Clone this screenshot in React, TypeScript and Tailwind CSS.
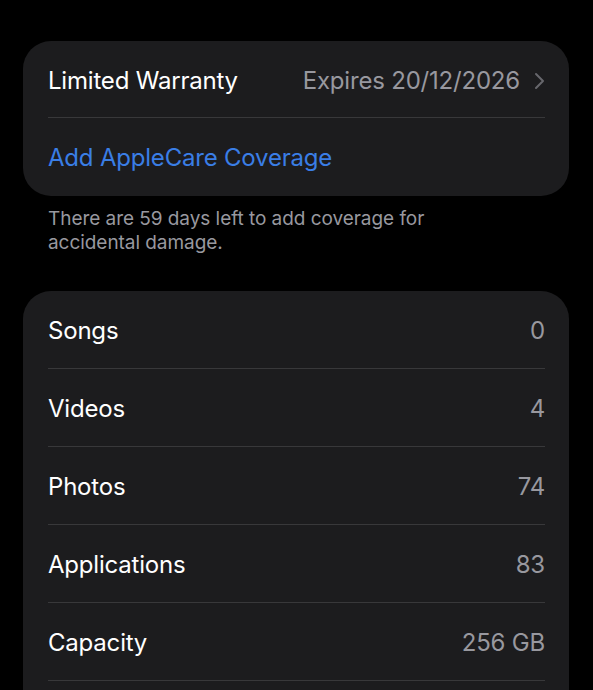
import React from 'react'

const font = { fontFamily: 'Inter, "Liberation Sans", sans-serif' }

const stats = [
  { label: 'Songs', value: '0' },
  { label: 'Videos', value: '4' },
  { label: 'Photos', value: '74' },
  { label: 'Applications', value: '83' },
  { label: 'Capacity', value: '256 GB' },
]

function Chevron() {
  return (
    <svg width="12" height="18" viewBox="0 0 12 18" fill="none" className="ml-[13px]">
      <path d="M3 2 L10 9 L3 16" stroke="#67676c" strokeWidth="2" strokeLinecap="round" strokeLinejoin="round" />
    </svg>
  )
}

export default function App() {
  return (
    <div className="h-[690px] w-full overflow-hidden bg-black pt-[41px] pl-[23px] pr-[24px]" style={font}>
      {/* Warranty card */}
      <div className="rounded-[28px] bg-[#1c1c1e] pl-[25px] pr-[24px]">
        <div className="flex h-[77px] items-center justify-between border-b border-[#38383a] pt-[3px]">
          <span className="text-[24px] tracking-[-0.2px] text-white">Limited Warranty</span>
          <div className="flex items-center">
            <span className="text-[24px] tracking-[-0.2px] text-[#98989f]">Expires 20/12/2026</span>
            <Chevron />
          </div>
        </div>
        <div className="flex h-[78px] items-center pt-[2px]">
          <span className="text-[24px] tracking-[-0.2px] text-[#3a7ee6]">Add AppleCare Coverage</span>
        </div>
      </div>

      <p className="mt-[11px] max-w-[425px] pl-[25px] text-[19px] leading-[24px] tracking-[-0.05px] text-[#98989f]">
        There are 59 days left to add coverage for accidental damage.
      </p>

      {/* Stats card */}
      <div className="mt-[36px] rounded-t-[28px] bg-[#1c1c1e] pl-[25px] pr-[24px] pb-[20px]">
        {stats.map(s => (
          <div
            key={s.label}
            className="flex h-[78px] items-center justify-between border-b border-[#38383a] pt-[3px]"
          >
            <span className="text-[24px] tracking-[-0.2px] text-white">{s.label}</span>
            <span className="text-[24px] tracking-[-0.2px] text-[#98989f]">{s.value}</span>
          </div>
        ))}
      </div>
    </div>
  )
}
